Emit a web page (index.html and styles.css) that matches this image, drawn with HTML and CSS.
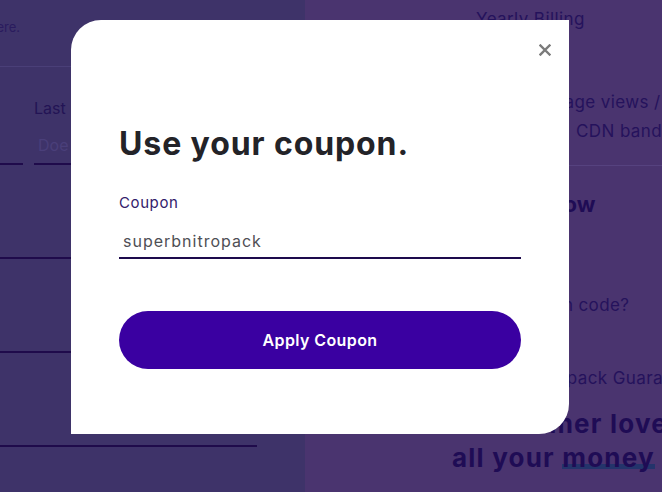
FILE: index.html
```html
<!DOCTYPE html>
<html lang="en">
<head>
  <meta charset="UTF-8">
  <meta name="viewport" content="width=device-width, initial-scale=1.0">
  <title>Checkout - Use your coupon</title>
  <link rel="stylesheet" href="styles.css">
</head>
<body>
  <!-- Pagina de checkout detras del modal -->
  <div class="page">
    <div class="form-side">
      <div class="form">
        <div class="notice"><span>Already have an account? Log in here.</span></div>
        <hr class="thin-rule">
        <div class="row">
          <div class="field">
            <label class="field-label">First name</label>
            <div class="field-input placeholder">John</div>
          </div>
          <div class="field">
            <label class="field-label">Last name</label>
            <div class="field-input placeholder">Doe</div>
          </div>
        </div>
        <div class="field">
          <label class="field-label">Email address</label>
          <div class="field-input"></div>
        </div>
        <div class="field">
          <label class="field-label">Company</label>
          <div class="field-input"></div>
        </div>
        <div class="field">
          <label class="field-label">Password</label>
          <div class="field-input"></div>
        </div>
      </div>
    </div>

    <div class="summary-side">
      <p class="billing">Yearly Billing</p>
      <p class="feature views">25K page views / month</p>
      <p class="feature cdn">CDN bandwidth</p>
      <hr class="summary-rule">
      <p class="pay">Pay now</p>
      <p class="feature promo">promotion code?</p>
      <p class="feature guarantee">Nitropack Guarantee</p>
      <p class="love line-one">Customer love</p>
      <p class="love line-two">all your <span class="marked">money</span></p>
    </div>
  </div>

  <!-- Modal del cupon -->
  <div class="overlay">
    <div class="modal">
      <button class="close-button" aria-label="Close">
        <svg width="12" height="12" viewBox="0 0 12 12">
          <path d="M1.5 1.5 L10.5 10.5 M10.5 1.5 L1.5 10.5" stroke="#7b7b7b" stroke-width="2.4" stroke-linecap="square"/>
        </svg>
      </button>
      <h2 class="modal-title">Use your coupon.</h2>
      <label class="coupon-label" for="coupon">Coupon</label>
      <input class="coupon-input" id="coupon" type="text" value="superbnitropack" autofocus>
      <button class="apply-button">Apply Coupon</button>
    </div>
  </div>
</body>
</html>
```

FILE: styles.css
```css
/* Estilos basicos */
body {
  margin: 0;
  font-family: Inter, "Liberation Sans", sans-serif;
  overflow: hidden;
}
p {
  margin: 0;
}

.page {
  display: grid;
  grid-template-columns: 305px 1fr;
  height: 492px;
  overflow: hidden;
}

/* Lado izquierdo: formulario */
.form-side {
  background-color: #3e3369;
  overflow: hidden;
  padding-top: 19px;
}
.form {
  margin-left: -200px;
  width: 457px;
}
.notice {
  display: flex;
  justify-content: flex-end;
  width: 220px;
  font-size: 13px;
  line-height: 16px;
  color: #2a1b5e;
  white-space: nowrap;
}
.thin-rule {
  margin: 31px 0 0;
  border: none;
  border-top: 1px solid #4a3f78;
}
.row {
  display: grid;
  grid-template-columns: 1fr 1fr;
  gap: 11px;
}
.field {
  margin-top: 27px;
}
.row .field {
  margin-top: 31px;
}
.field-label {
  display: block;
  font-size: 16px;
  line-height: 20px;
  color: #231455;
  margin-bottom: 9px;
}
.field-input {
  height: 20px;
  padding: 8px 4px;
  font-size: 16px;
  line-height: 20px;
  border-bottom: 2px solid #1f0b4b;
}
.placeholder {
  color: #4a3f7a;
}

/* Lado derecho: resumen */
.summary-side {
  background-color: #4a346f;
  padding: 9px 0 0 171px;
  color: #25125c;
  white-space: nowrap;
}
.billing,
.feature {
  font-size: 17px;
  line-height: 20px;
  letter-spacing: 0.4px;
}
.views {
  margin: 63px 0 0 39px;
}
.cdn {
  margin: 9px 0 0 100px;
}
.summary-rule {
  margin: 24px 0 0 60px;
  border: none;
  border-top: 1px solid #56427f;
}
.pay {
  margin: 25px 0 0 29px;
  font-size: 22px;
  line-height: 26px;
  font-weight: 700;
  color: #1f0c55;
}
.promo {
  margin: 78px 0 0 12px;
}
.guarantee {
  margin: 53px 0 0 50px;
}
.love {
  font-size: 26px;
  line-height: 34px;
  font-weight: 700;
  letter-spacing: 1.2px;
  color: #1f0c55;
}
.line-one {
  margin: 19px 0 0 -8px;
}
.line-two {
  margin-left: -24px;
}
.marked {
  background: linear-gradient(transparent 70%, #24346b 70%, #24346b 88%, transparent 88%);
}

/* Modal */
.overlay {
  position: fixed;
  inset: 0;
  padding: 20px 0 0 71px;
}
.modal {
  position: relative;
  box-sizing: border-box;
  width: 498px;
  height: 414px;
  padding: 105px 48px 0;
  background-color: #ffffff;
  border-radius: 30px 0 30px 0;
}
.close-button {
  position: absolute;
  top: 18px;
  right: 12px;
  width: 24px;
  height: 24px;
  padding: 0;
  border: none;
  background: none;
  display: flex;
  align-items: center;
  justify-content: center;
  cursor: pointer;
}
.modal-title {
  margin: 0;
  font-size: 32px;
  line-height: 38px;
  font-weight: 700;
  letter-spacing: 0.9px;
  color: #232328;
}
.coupon-label {
  display: block;
  margin-top: 30px;
  font-size: 15px;
  line-height: 20px;
  letter-spacing: 0.6px;
  color: #33206b;
}
.coupon-input {
  display: block;
  box-sizing: border-box;
  width: 100%;
  height: 32px;
  margin-top: 14px;
  padding: 0 4px 3px;
  border: none;
  border-bottom: 2px solid #1d0a4c;
  font-family: inherit;
  font-size: 16px;
  letter-spacing: 1px;
  color: #4f4f55;
  caret-color: #333333;
  outline: none;
}
.apply-button {
  display: flex;
  align-items: center;
  justify-content: center;
  width: 100%;
  height: 58px;
  margin-top: 52px;
  border: none;
  border-radius: 29px;
  background-color: #3a00a1;
  color: #ffffff;
  font-family: inherit;
  font-size: 16px;
  font-weight: 600;
  letter-spacing: 0.4px;
  cursor: pointer;
}
```
